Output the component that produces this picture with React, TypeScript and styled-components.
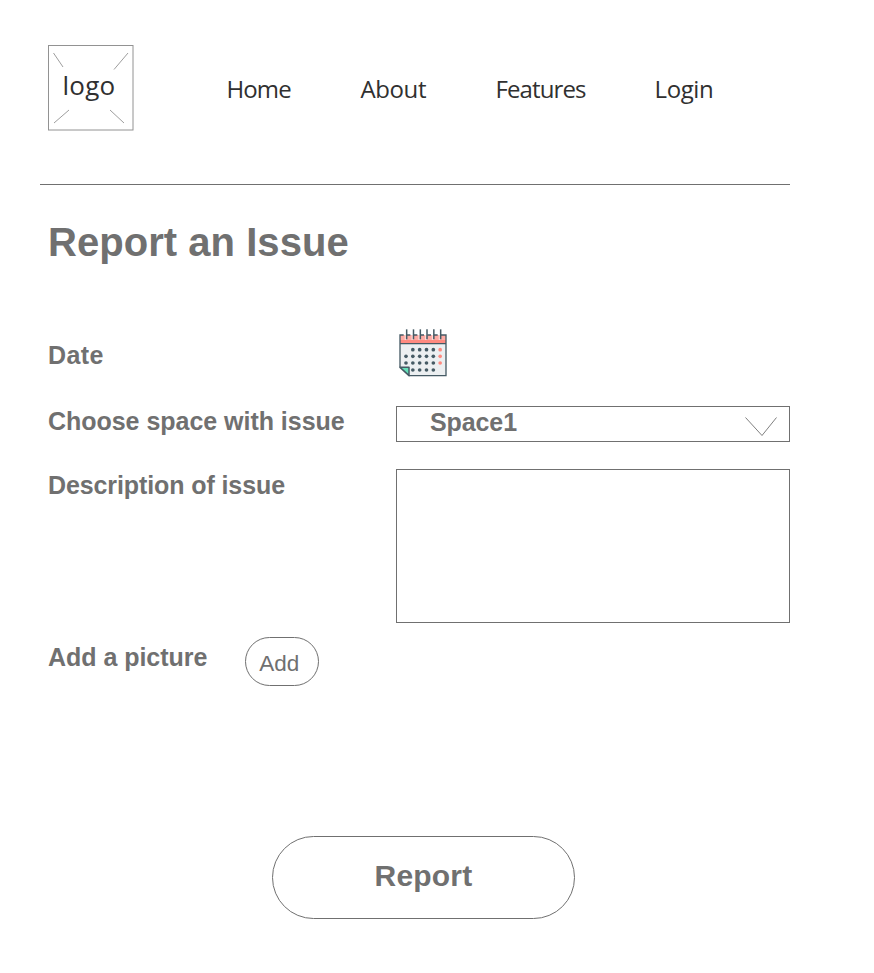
import React from 'react';
import styled, { createGlobalStyle } from 'styled-components';

const GlobalStyle = createGlobalStyle`
  * { box-sizing: border-box; }
  body { margin: 0; background: #fff; }
`;

const gray = '#707070';

const Page = styled.div`
  width: 874px;
  height: 973px;
  padding: 44px 84px 0 40px;
  display: flex;
  flex-direction: column;
  background: #fff;
  color: ${gray};
  font-family: 'Liberation Sans', Arial, sans-serif;
`;

const Header = styled.header`
  height: 141px;
  flex: none;
  display: flex;
  align-items: flex-start;
  padding-left: 8px;
  border-bottom: 1px solid ${gray};
`;

const Logo = styled.div`
  display: grid;
  width: 86px;
  height: 87px;
  > * { grid-area: 1 / 1; }
`;

const LogoText = styled.span`
  justify-self: center;
  padding-right: 4px;
  margin-top: 23px;
  font: 26px/36px 'Open Sans', sans-serif;
  letter-spacing: 0.2px;
  color: #303030;
`;

const Nav = styled.nav`
  display: flex;
  margin: 28px 0 0 92px;
`;

const NavItem = styled.a<{ $width: number; $spacing: number }>`
  width: ${(p) => p.$width}px;
  padding-left: 0.5px;
  font: 24px/34px 'Open Sans', sans-serif;
  letter-spacing: ${(p) => p.$spacing}px;
  color: #303030;
  white-space: nowrap;
`;

const Title = styled.h1`
  margin: 34px 0 0 8px;
  font-size: 40px;
  line-height: 46px;
  font-weight: 700;
  letter-spacing: 0.04px;
`;

const Form = styled.form`
  margin: 63px 0 0 8px;
  display: grid;
  grid-template-columns: 348px 394px;
  grid-template-rows: 78px 63px 168px 50px;
`;

const Label = styled.label<{ $top: number; $spacing?: number }>`
  margin-top: ${(p) => p.$top}px;
  font-size: 25px;
  line-height: 28px;
  letter-spacing: ${(p) => p.$spacing ?? -0.03}px;
  font-weight: 700;
  white-space: nowrap;
`;

const DateButton = styled.span`
  padding: 1px 0 0 3px;
  svg { display: block; }
`;

const Select = styled.div`
  height: 36px;
  border: 1px solid ${gray};
  display: flex;
  justify-content: space-between;
  padding: 0 12px 0 33px;
  font-size: 25px;
  line-height: 30px;
  font-weight: 700;
  letter-spacing: -0.1px;
  svg { margin-top: 10px; }
`;

const Description = styled.textarea`
  display: block;
  width: 394px;
  height: 154px;
  border: 1px solid ${gray};
  border-radius: 0;
  background: #fff;
  resize: none;
  outline: none;
`;

const PictureRow = styled.div`
  display: flex;
  justify-content: space-between;
  width: 270.5px;
`;

const Pill = styled.button<{ $large?: boolean }>`
  width: ${(p) => (p.$large ? 303 : 73.5)}px;
  height: ${(p) => (p.$large ? 83 : 49)}px;
  border: 1px solid ${gray};
  border-radius: ${(p) => (p.$large ? 42 : 25)}px;
  padding: ${(p) => (p.$large ? '0 0 3px' : '4px 5px 0 0')};
  background: #fff;
  color: ${gray};
  font-family: inherit;
  font-size: ${(p) => (p.$large ? 30 : 22.5)}px;
  font-weight: ${(p) => (p.$large ? 700 : 400)};
  letter-spacing: ${(p) => (p.$large ? 0.2 : 0)}px;
`;

const Footer = styled.footer`
  margin: 149px 0 0 232px;
`;

const LogoFrame = () => (
  <svg width="86" height="87" viewBox="0 0 86 87" fill="none" stroke="#929292">
    <rect x="0.5" y="1.5" width="84.5" height="84.5" />
    <path d="M5.5 9l9.5 14M80 9L66 25.500M6 79l15-13M62 66l14 13" strokeWidth="0.9" />
  </svg>
);

const dark = '#455a64';
const columns = [48, 68.5, 89, 109.500, 130, 150.500];
const rows = [89, 109, 129, 150];
const rings = [50, 70.5, 91, 111, 131.500, 152];

const Calendar = () => (
  <svg width="48" height="48" viewBox="27 27 144 144">
    <path d="M30 45H168V167H57L30 142Z" fill="#eceff1" />
    <path d="M30 45H168V71H30Z" fill="#ffaba4" />
    <path d="M30 60H168V71H30Z" fill="#ff8a80" />
    {rings.map((x) => (
      <path key={`gap-${x}`} d={`M${x - 6} 42H${x}V60H${x - 6}Z`} fill="#fff" fillOpacity="0.55" />
    ))}
    <path d="M30 142V45H41M51 45H61M71 45H82M92 45H102M112 45H123M132 45H143M153 45H168V167H57M30 71H168" fill="none" stroke={dark} strokeWidth="4" />
    <path d="M30 142H57V167Z" fill="#64dfb8" stroke={dark} strokeWidth="4.500" strokeLinejoin="round" />
    {rings.map((x) => (
      <path key={x} d={`M${x} 28V58`} stroke={dark} strokeWidth="4.500" />
    ))}
    {rows.map((y, r) =>
      columns.map((x, c) =>
        (r === 0 && c === 0) || (r === 3 && (c === 0 || c === 5)) ? null : (
          <circle key={`${r}-${c}`} cx={x} cy={y} r="5.500" fill={c === 5 ? '#ff8a80' : dark} />
        )
      )
    )}
  </svg>
);

const Chevron = () => (
  <svg width="32" height="20" viewBox="0 0 32 20" fill="none" stroke={gray} strokeWidth="0.9">
    <path d="M0.5 0.5L17 18.500L31.500 0.5" />
  </svg>
);

export default function App() {
  return (
    <>
      <GlobalStyle />
      <Page>
        <Header>
          <Logo>
            <LogoFrame />
            <LogoText>logo</LogoText>
          </Logo>
          <Nav>
            <NavItem $width={134} $spacing={-0.9}>Home</NavItem>
            <NavItem $width={135} $spacing={-0.4}>About</NavItem>
            <NavItem $width={159} $spacing={-0.9}>Features</NavItem>
            <NavItem $width={60} $spacing={-0.4}>Login</NavItem>
          </Nav>
        </Header>
        <Title>Report an Issue</Title>
        <Form onSubmit={(e) => e.preventDefault()}>
          <Label $top={13} $spacing={0.4}>Date</Label>
          <DateButton><Calendar /></DateButton>
          <Label $top={1}>Choose space with issue</Label>
          <Select>
            <span>Space1</span>
            <Chevron />
          </Select>
          <Label $top={2} $spacing={-0.1} htmlFor="description">Description of issue</Label>
          <Description id="description" />
          <PictureRow>
            <Label $top={6}>Add a picture</Label>
            <Pill type="button">Add</Pill>
          </PictureRow>
        </Form>
        <Footer>
          <Pill $large type="button">Report</Pill>
        </Footer>
      </Page>
    </>
  );
}
